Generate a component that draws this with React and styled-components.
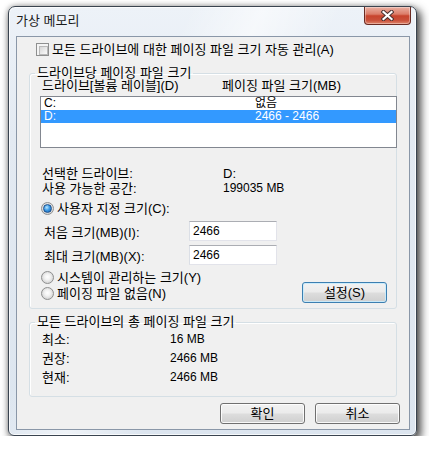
import React from 'react';
import styled, { createGlobalStyle } from 'styled-components';

const Global = createGlobalStyle`
  html, body { margin: 0; padding: 0; background: #ffffff; }
  body {
    font-family: "Liberation Sans", "Noto Sans CJK KR", sans-serif;
    font-size: 13px;
    color: #000;
  }
  * { box-sizing: border-box; }
`;

const Window = styled.div`
  margin: 6px 0 0 8px;
  width: 409px;
  height: 430px;
  border: 1px solid #3a4450;
  border-radius: 7px 7px 6px 6px;
  background:
    linear-gradient(115deg, rgba(255,255,255,0) 30%, rgba(255,255,255,0.55) 42%, rgba(255,255,255,0) 55%),
    linear-gradient(180deg, #edf2f8 0%, #e3eaf2 30%, #dce5ef 100%);
  box-shadow: 3px 4px 8px 1px rgba(0, 0, 0, 0.72), -1px -1px 4px rgba(0, 0, 0, 0.15),
    inset 0 0 0 1px rgba(255, 255, 255, 0.75);
  display: flex;
  flex-direction: column;
  padding: 0 6px 5px 7px;
`;

const TitleBar = styled.div`
  height: 29px;
  flex: none;
  display: flex;
  align-items: flex-start;
`;

const Title = styled.span`
  margin-top: 7px;
  line-height: 14px;
  color: #1b1b1b;
`;

const CloseButton = styled.div`
  margin-left: auto;
  margin-right: -1px;
  width: 47px;
  height: 18px;
  border: 1px solid #6a2a22;
  border-top: none;
  border-radius: 0 0 4px 4px;
  background: linear-gradient(180deg, #eab0a2 0%, #dc7d69 42%, #c8442d 52%, #c9503a 78%, #e0866c 100%);
  box-shadow: inset 0 0 0 1px rgba(255, 255, 255, 0.35);
  display: flex;
  align-items: center;
  justify-content: center;
`;

const Client = styled.div`
  flex: 1;
  border: 1px solid #8a97a8;
  background: #f0f0f0;
  display: flex;
  flex-direction: column;
  padding: 0 12px;
`;

const CheckRow = styled.label`
  margin-top: 6px;
  padding-left: 7px;
  height: 13px;
  display: flex;
  align-items: center;
  gap: 3px;
  line-height: 13px;
`;

const CheckBox = styled.span`
  width: 13px;
  height: 13px;
  flex: none;
  border: 1px solid #8e8f8f;
  background: #f4f4f4;
  padding: 2px;
  &::after {
    content: '';
    display: block;
    width: 100%;
    height: 100%;
    border: 1px solid #b9b9b9;
    background: linear-gradient(135deg, #d6d6d6 0%, #ececec 60%, #fafafa 100%);
  }
`;

const Group = styled.fieldset`
  margin: ${p => p.$top}px 0 0 0;
  padding: 0;
  border: 1px solid #d5dfe5;
  border-radius: 3px;
  box-shadow: inset 1px 1px 0 #ffffff;
  min-width: 0;
`;

const Legend = styled.legend`
  margin-left: 5px;
  padding: 0 2px;
  line-height: 12px;
`;

const GroupBody = styled.div`
  padding: ${p => p.$pt || 0}px 10px ${p => p.$pb}px 11px;
  display: flex;
  flex-direction: column;
`;

const HeaderRow = styled.div`
  margin: 1px 0 0 1px;
  display: grid;
  grid-template-columns: 180px auto;
  line-height: 12px;
`;

const ListBox = styled.div`
  margin: 4px -11px 0 -1px;
  height: 52px;
  border: 1px solid #828790;
  background: #ffffff;
`;

const ListRow = styled.div`
  height: 13px;
  line-height: 13px;
  font-size: 12px;
  padding-left: 3px;
  display: grid;
  grid-template-columns: 211px auto;
  background: ${p => (p.$selected ? '#3399ff' : 'transparent')};
  color: ${p => (p.$selected ? '#ffffff' : '#000000')};
`;

const Num = styled.span`
  font-size: 12px;
`;

const InfoGrid = styled.div`
  margin: ${p => p.$mt || 0}px 0 0 1px;
  display: grid;
  grid-template-columns: ${p => p.$col}px auto;
  line-height: ${p => p.$lh}px;
`;

const RadioRow = styled.label`
  height: 15px;
  display: flex;
  align-items: center;
  gap: 3px;
  line-height: 15px;
  margin-top: ${p => p.$mt || 0}px;
`;

const Radio = styled.span`
  width: 13px;
  height: 13px;
  flex: none;
  border-radius: 50%;
  border: 1px solid #8e8f8f;
  background: radial-gradient(circle at 50% 45%, #ffffff 0%, #f2f2f2 35%, #d4d4d4 75%, #e8e8e8 100%);
  display: flex;
  align-items: center;
  justify-content: center;
  &::after {
    content: '';
    display: ${p => (p.$checked ? 'block' : 'none')};
    width: 7px;
    height: 7px;
    border-radius: 50%;
    border: 1px solid #1d4f8a;
    background: radial-gradient(circle at 40% 35%, #b8e6ff 0%, #3d9be6 45%, #0f5aa8 100%);
  }
`;

const SizeRows = styled.div`
  margin-top: 5px;
  display: flex;
  flex-direction: column;
  gap: 4px;
`;

const SizeRow = styled.div`
  margin-left: 3px;
  height: 20px;
  display: grid;
  grid-template-columns: 145px 88px;
  align-items: center;
`;

const TextBox = styled.input`
  width: 88px;
  height: 20px;
  border: 1px solid #e2e3ea;
  border-top-color: #abadb3;
  border-left-color: #dbdfe6;
  background: #ffffff;
  font-family: inherit;
  font-size: 12px;
  padding: 0 0 0 3px;
  color: #000;
  outline: none;
`;

const ChoiceRow = styled.div`
  margin-top: 5px;
  display: flex;
  align-items: flex-start;
`;

const ChoiceColumn = styled.div`
  display: flex;
  flex-direction: column;
  gap: 1px;
`;

const PushButton = styled.button`
  width: ${p => p.$w}px;
  height: 21px;
  padding: 0;
  margin: ${p => p.$margin || 0};
  border: 1px solid ${p => (p.$focused ? '#3c7fb1' : '#707070')};
  border-radius: 3px;
  background: linear-gradient(180deg, #f2f2f2 0%, #ebebeb 48%, #dddddd 52%, #cfcfcf 100%);
  box-shadow: inset 0 0 0 1px ${p => (p.$focused ? 'rgba(200,235,252,0.9)' : 'rgba(255,255,255,0.85)')};
  font: inherit;
  color: #000;
  line-height: 19px;
`;

const ButtonRow = styled.div`
  margin: 6px -3px 0 0;
  display: flex;
  justify-content: flex-end;
  gap: 10px;
`;

function CloseGlyph() {
  return (
    <svg width="13" height="11" viewBox="0 0 13 11">
      <path d="M2.5 2 L10.5 9 M10.5 2 L2.5 9" stroke="#4b3030" strokeWidth="4.2" strokeLinecap="square" fill="none" />
      <path d="M2.5 2 L10.5 9 M10.5 2 L2.5 9" stroke="#ffffff" strokeWidth="2.2" strokeLinecap="square" fill="none" />
    </svg>
  );
}

export default function App() {
  return (
    <>
      <Global />
      <Window>
        <TitleBar>
          <Title>가상 메모리</Title>
          <CloseButton>
            <CloseGlyph />
          </CloseButton>
        </TitleBar>
        <Client>
          <CheckRow>
            <CheckBox />
            <span>모든 드라이브에 대한 페이징 파일 크기 자동 관리(A)</span>
          </CheckRow>

          <Group $top={11}>
            <Legend>드라이브당 페이징 파일 크기</Legend>
            <GroupBody $pb={5}>
              <HeaderRow>
                <span>드라이브[볼륨 레이블](D)</span>
                <span>페이징 파일 크기(MB)</span>
              </HeaderRow>
              <ListBox>
                <ListRow>
                  <span>C:</span>
                  <span>없음</span>
                </ListRow>
                <ListRow $selected>
                  <span>D:</span>
                  <span>2466 - 2466</span>
                </ListRow>
              </ListBox>
              <InfoGrid $mt={18} $col={181} $lh={15}>
                <span>선택한 드라이브:</span>
                <span>D:</span>
                <span>사용 가능한 공간:</span>
                <Num>199035 MB</Num>
              </InfoGrid>
              <RadioRow $mt={5}>
                <Radio $checked />
                <span>사용자 지정 크기(C):</span>
              </RadioRow>
              <SizeRows>
                <SizeRow>
                  <span>처음 크기(MB)(I):</span>
                  <TextBox defaultValue="2466" />
                </SizeRow>
                <SizeRow>
                  <span>최대 크기(MB)(X):</span>
                  <TextBox defaultValue="2466" />
                </SizeRow>
              </SizeRows>
              <ChoiceRow>
                <ChoiceColumn>
                  <RadioRow>
                    <Radio />
                    <span>시스템이 관리하는 크기(Y)</span>
                  </RadioRow>
                  <RadioRow>
                    <Radio />
                    <span>페이징 파일 없음(N)</span>
                  </RadioRow>
                </ChoiceColumn>
                <PushButton $w={85} $focused $margin="12px -1px 0 auto">설정(S)</PushButton>
              </ChoiceRow>
            </GroupBody>
          </Group>

          <Group $top={7}>
            <Legend>모든 드라이브의 총 페이징 파일 크기</Legend>
            <GroupBody $pt={2} $pb={9}>
              <InfoGrid $col={128} $lh={19}>
                <span>최소:</span>
                <Num>16 MB</Num>
                <span>권장:</span>
                <Num>2466 MB</Num>
                <span>현재:</span>
                <Num>2466 MB</Num>
              </InfoGrid>
            </GroupBody>
          </Group>

          <ButtonRow>
            <PushButton $w={85}>확인</PushButton>
            <PushButton $w={85}>취소</PushButton>
          </ButtonRow>
        </Client>
      </Window>
    </>
  );
}
